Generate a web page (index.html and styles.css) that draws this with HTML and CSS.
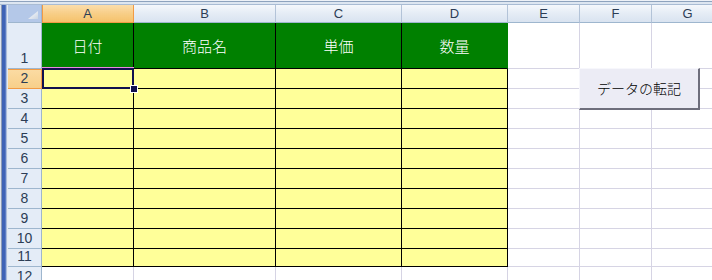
FILE: index.html
```html
<!DOCTYPE html>
<html lang="ja">
<head>
<meta charset="utf-8">
<title>Sheet</title>
<link rel="stylesheet" href="styles.css">
</head>
<body>
<div class="window">
  <div class="topbar"></div>
  <div class="main">
    <div class="frame"></div>
    <div class="sheet">
      <div class="corner"><svg width="10" height="8" viewBox="0 0 10 8"><defs><linearGradient id="tg" x1="0" y1="0" x2="1" y2="1"><stop offset="0" stop-color="#ffffff"/><stop offset="1" stop-color="#c9d4e3"/></linearGradient></defs><polygon points="10,0 10,8 0,8" fill="url(#tg)"/></svg></div>
      <div class="ch sel">A</div><div class="ch">B</div><div class="ch">C</div><div class="ch">D</div><div class="ch">E</div><div class="ch">F</div><div class="ch">G</div>

      <div class="rh">1</div>
      <div class="g">日付</div><div class="g">商品名</div><div class="g">単価</div><div class="g last">数量</div><div class="c"></div><div class="c"></div><div class="c"></div>

      <div class="rh sel">2</div>
      <div class="y"></div><div class="y"></div><div class="y"></div><div class="y"></div><div class="c"></div><div class="c"></div><div class="c"></div>
      <div class="rh">3</div>
      <div class="y"></div><div class="y"></div><div class="y"></div><div class="y"></div><div class="c"></div><div class="c"></div><div class="c"></div>
      <div class="rh">4</div>
      <div class="y"></div><div class="y"></div><div class="y"></div><div class="y"></div><div class="c"></div><div class="c"></div><div class="c"></div>
      <div class="rh">5</div>
      <div class="y"></div><div class="y"></div><div class="y"></div><div class="y"></div><div class="c"></div><div class="c"></div><div class="c"></div>
      <div class="rh">6</div>
      <div class="y"></div><div class="y"></div><div class="y"></div><div class="y"></div><div class="c"></div><div class="c"></div><div class="c"></div>
      <div class="rh">7</div>
      <div class="y"></div><div class="y"></div><div class="y"></div><div class="y"></div><div class="c"></div><div class="c"></div><div class="c"></div>
      <div class="rh">8</div>
      <div class="y"></div><div class="y"></div><div class="y"></div><div class="y"></div><div class="c"></div><div class="c"></div><div class="c"></div>
      <div class="rh">9</div>
      <div class="y"></div><div class="y"></div><div class="y"></div><div class="y"></div><div class="c"></div><div class="c"></div><div class="c"></div>
      <div class="rh">10</div>
      <div class="y"></div><div class="y"></div><div class="y"></div><div class="y"></div><div class="c"></div><div class="c"></div><div class="c"></div>
      <div class="rh">11</div>
      <div class="y"></div><div class="y"></div><div class="y"></div><div class="y"></div><div class="c"></div><div class="c"></div><div class="c"></div>
      <div class="rh">12</div>
      <div class="c"></div><div class="c"></div><div class="c"></div><div class="c"></div><div class="c"></div><div class="c"></div><div class="c"></div>
    </div>
  </div>
  <div class="selection"><span class="handle"></span></div>
  <button class="macro-btn" type="button">データの転記</button>
</div>
</body>
</html>
```

FILE: styles.css
```css
* { box-sizing: border-box; }

html, body {
  margin: 0;
  padding: 0;
  background: #ffffff;
}

body {
  width: 712px;
  height: 280px;
  overflow: hidden;
  font-family: "Liberation Sans", "Noto Sans CJK JP", sans-serif;
}

.window {
  position: relative;
  width: 712px;
  height: 280px;
  overflow: hidden;
  display: flex;
  flex-direction: column;
}

.topbar {
  height: 5px;
  flex: none;
  background: linear-gradient(to bottom, #eef2f8 0 1px, #8ea3be 1px 2px, #dde6f1 2px 4px, #a9bcd4 4px 5px);
}

.main {
  display: flex;
  flex: 1;
}

.frame {
  width: 8px;
  flex: none;
  background: linear-gradient(to right, #dfe5ee 0 1px, #8d9bb4 1px 2px, #3f63b6 2px 5px, #5c7cc4 5px 6px, #a9bcdc 6px 7px, #e3e9f2 7px 8px);
}

.sheet {
  display: grid;
  grid-template-columns: 34px 92px 142px 126px 106px 72px 72px 72px;
  grid-template-rows: 18px 46px repeat(9, 20px) 18px 20px;
}

.sheet > div {
  border-right: 1px solid #d6d4e4;
  border-bottom: 1px solid #d6d4e4;
}

.sheet > .corner {
  background: #b4c8e8;
  border-right: 1px solid #9eb6ce;
  border-bottom: 1px solid #9eb6ce;
  display: flex;
  align-items: flex-end;
  justify-content: flex-end;
  padding: 0 3px 3px 0;
}

.corner svg { display: block; }

.sheet > .ch {
  background: linear-gradient(to bottom, #f5f8fc 0%, #e6edf6 45%, #d9e3f0 100%);
  border-right: 1px solid #b3c3d8;
  border-bottom: 1px solid #9eb6ce;
  color: #2c3d55;
  font-family: "Liberation Sans", sans-serif;
  font-size: 13px;
  line-height: 17px;
  text-align: center;
}

.sheet > .ch.sel {
  background:
    radial-gradient(circle, rgba(240, 170, 80, 0.35) 0.6px, transparent 0.8px) 0 0 / 2px 2px,
    linear-gradient(to bottom, #fde7bd 0%, #f9d592 50%, #f7c771 100%);
  border-right: 1px solid #f29b45;
  border-bottom: 1px solid #f29b45;
  box-shadow: inset 1px 0 0 #f29b45;
}

.sheet > .rh {
  background: #e4ecf7;
  border-right: 1px solid #9eb6ce;
  border-bottom: 1px solid #9eb6ce;
  color: #2c3d55;
  font-family: "Liberation Sans", sans-serif;
  font-size: 14px;
  line-height: 15px;
  display: flex;
  align-items: flex-end;
  justify-content: center;
  padding-bottom: 2px;
}

.sheet > .rh.sel {
  background: linear-gradient(to bottom, #fbdca4, #f7cf8a);
  border-right: 1px solid #f29b45;
  border-bottom: 1px solid #f29b45;
  box-shadow: inset 0 1px 0 #f29b45;
}

.sheet > .g {
  background: #008000;
  border-right: 1px solid #000000;
  border-bottom: 1px solid #000000;
  color: #ffffff;
  font-family: "Noto Sans CJK JP", sans-serif;
  font-weight: 300;
  font-size: 15px;
  display: flex;
  align-items: center;
  justify-content: center;
  padding-bottom: 1px;
}

.sheet > .g.last {
  border-right-color: #008000;
}

.sheet > .y {
  background: #ffff99;
  border-right: 1px solid #000000;
  border-bottom: 1px solid #000000;
}

.selection {
  position: absolute;
  left: 42px;
  top: 68px;
  width: 92px;
  height: 21px;
  border: 2px solid #10104e;
  box-shadow: 0 -1px 0 #ea8ae2;
}

.handle {
  position: absolute;
  right: -5px;
  bottom: -5px;
  width: 6px;
  height: 6px;
  background: #10104e;
  outline: 1px solid #ffffff;
}

.macro-btn {
  position: absolute;
  left: 579px;
  top: 68px;
  width: 121px;
  height: 42px;
  margin: 0;
  padding: 0 0 1px 0;
  background: #ececf5;
  border-style: solid;
  border-width: 1px 2px 2px 1px;
  border-color: #f7f7fc #6e6e7c #6e6e7c #f7f7fc;
  border-radius: 0;
  font-family: "Noto Sans CJK JP", sans-serif;
  font-weight: 300;
  font-size: 14px;
  color: #000000;
  text-align: center;
  cursor: default;
}
```
